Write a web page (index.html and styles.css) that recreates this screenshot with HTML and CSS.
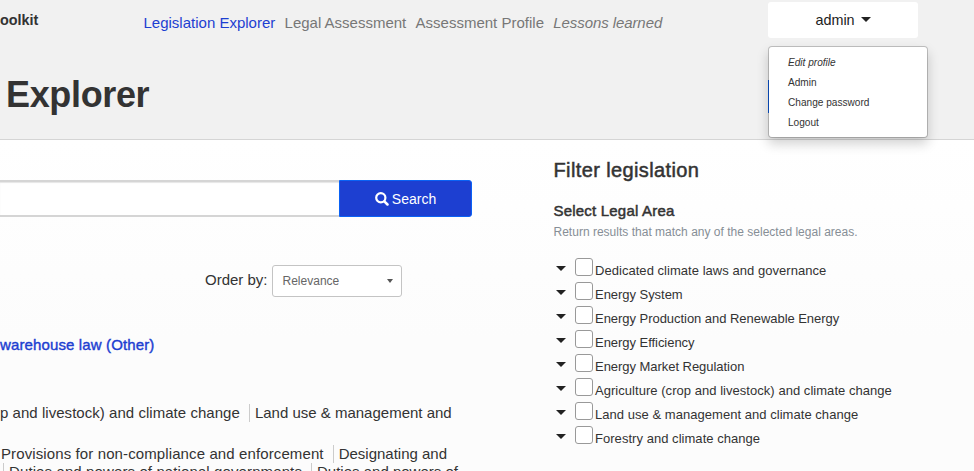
FILE: index.html
```html
<!DOCTYPE html>
<html lang="en">
<head>
<meta charset="utf-8">
<title>Legislation Explorer</title>
<link rel="stylesheet" href="styles.css">
</head>
<body>
<header class="header">
  <div class="topbar">
    <div class="brand">oolkit</div>
    <nav class="nav">
      <a class="active">Legislation Explorer</a>
      <a>Legal Assessment</a>
      <a>Assessment Profile</a>
      <a class="italic">Lessons learned</a>
    </nav>
    <div class="account">
      <button class="account-btn">admin<span class="caret"></span></button>
      <div class="menu">
        <a class="italic">Edit profile</a>
        <a>Admin</a>
        <a>Change password</a>
        <a>Logout</a>
      </div>
    </div>
  </div>
  <div class="titlebar">
    <h1>Explorer</h1>
    <span class="action"></span>
  </div>
</header>
<main class="main">
  <section class="results">
    <div class="search">
      <div class="search-input"></div>
      <button class="search-btn">
        <svg width="14" height="14" viewBox="0 0 14 14"><circle cx="5.8" cy="5.8" r="4.6" fill="none" stroke="#fff" stroke-width="2.2"/><path d="M9.3 9.3L12.5 12.5" stroke="#fff" stroke-width="2.5" stroke-linecap="round"/></svg>
        <span>Search</span>
      </button>
    </div>
    <div class="order">
      <span class="order-label">Order by:</span>
      <div class="select"><span>Relevance</span><i class="caret small"></i></div>
    </div>
    <h2 class="result-title">warehouse law (Other)</h2>
    <div class="tags first"><span class="t1">p and livestock) and climate change</span><span class="t2">Land use &amp; management and</span></div>
    <div class="tags second"><span class="t3">Provisions for non-compliance and enforcement</span><span class="t4">Designating and</span></div>
    <div class="tags third"><span class="t5">Duties and powers of national governments</span><span class="t6">Duties and powers of</span></div>
  </section>
  <aside class="filter">
    <h3>Filter legislation</h3>
    <h4>Select Legal Area</h4>
    <p>Return results that match any of the selected legal areas.</p>
    <ul>
      <li><i class="caret"></i><span class="box"></span><label>Dedicated climate laws and governance</label></li>
      <li><i class="caret"></i><span class="box"></span><label class="tight">Energy System</label></li>
      <li><i class="caret"></i><span class="box"></span><label class="tight">Energy Production and Renewable Energy</label></li>
      <li><i class="caret"></i><span class="box"></span><label class="tight">Energy Efficiency</label></li>
      <li><i class="caret"></i><span class="box"></span><label class="tight">Energy Market Regulation</label></li>
      <li><i class="caret"></i><span class="box"></span><label>Agriculture (crop and livestock) and climate change</label></li>
      <li><i class="caret"></i><span class="box"></span><label>Land use &amp; management and climate change</label></li>
      <li><i class="caret"></i><span class="box"></span><label>Forestry and climate change</label></li>
    </ul>
  </aside>
</main>
</body>
</html>
```
FILE: styles.css
```css
* { box-sizing: border-box; }
html, body { margin: 0; height: 471px; overflow: hidden; }
body {
  font-family: "Liberation Sans", Arial, sans-serif;
  font-size: 15px;
  color: #333;
  background: #fff;
}
h1, h2, h3, h4, p, ul { margin: 0; padding: 0; }
button { font-family: inherit; padding: 0; }
.italic { font-style: italic; }
.caret {
  display: inline-block;
  height: 0;
  border-left: 5px solid transparent;
  border-right: 5px solid transparent;
  border-top: 5px solid #222;
}
.caret.small { border-width: 4px 3.5px 0; border-top-color: #555; }

.header { height: 140px; background: #f1f1f1; border-bottom: 1px solid #d5d5d5; }
.topbar { display: flex; height: 46px; }
.brand { width: 143.5px; padding-top: 12px; font-size: 14.4px; line-height: 17px; font-weight: bold; }
.nav { display: flex; gap: 9.3px; width: 624.5px; padding-top: 14px; line-height: 18px; color: #777; white-space: nowrap; }
.nav .active { color: #1d3fd1; }
.nav .italic { letter-spacing: -.08px; }
.account { position: relative; padding-top: 2px; }
.account-btn {
  display: flex; align-items: center; justify-content: center; gap: 6px;
  width: 150px; height: 36px; border: 0; border-radius: 3px;
  background: #fff; color: #222; font-size: 14.4px;
}
.account-btn .caret { margin-bottom: 2px; }
.menu {
  position: absolute; left: 0; top: 46px; z-index: 2;
  display: flex; flex-direction: column;
  width: 160px; height: 92px; padding: 6px 19px;
  border: 1px solid rgba(0, 0, 0, .2); border-radius: 4px;
  background: #fff; background-clip: padding-box;
  box-shadow: 0 6px 12px rgba(0, 0, 0, .18);
  font-size: 10.1px; line-height: 20px;
}
.titlebar { display: flex; padding-left: 6px; }
h1 { width: 762px; padding-top: 28px; font-size: 36px; line-height: 42px; letter-spacing: -.35px; }
.action { width: 100px; height: 33px; margin-top: 34px; background: #0d62f0; }

.main { display: flex; height: 331px; background: linear-gradient(#fff, #fcfcfc 60%); }
.results { width: 553.5px; padding-top: 40px; }
.search { display: flex; width: 472px; height: 37px; }
.search-input { flex: 1; border: 2px solid #d5d5d5; border-width: 2px 0; background: #fff; box-shadow: inset 0 1px 1px rgba(0, 0, 0, .1); }
.search-btn {
  display: flex; align-items: center; justify-content: center; gap: 3px;
  width: 133px; border: 1px solid #0a62f5; border-radius: 0 3px 3px 0;
  background: #1d3fd1; color: #fff; font-size: 14px;
}
.order { display: flex; align-items: center; gap: 4px; height: 32px; margin: 48px 0 0 205px; }
.order-label { padding-bottom: 3px; }
.select {
  display: flex; align-items: center; justify-content: space-between;
  width: 130px; height: 32px; padding: 0 8px 0 10px;
  border: 1px solid #c4c4c4; border-radius: 3px; background: #fff;
  color: #666; font-size: 12px;
}
.result-title { margin-top: 39px; font-size: 15px; line-height: 18px; font-weight: normal; letter-spacing: .13px; color: #1d3fd1; -webkit-text-stroke: .4px #1d3fd1; }
.tags { display: flex; height: 18px; line-height: 18px; white-space: nowrap; }
.tags span + span { margin-left: 9px; padding-left: 5px; border-left: 1px solid #ccc; }
.t1 { letter-spacing: .04px; }
.t3, .t5 { letter-spacing: .11px; }
.first { margin-top: 50px; }
.second { margin-top: 23px; padding-left: 1px; }
.third { padding-left: 3px; }
.t5 { padding-left: 5px; border-left: 1px solid #ccc; }

.filter { padding-top: 17px; }
h3 { font-size: 20px; line-height: 26px; font-weight: normal; letter-spacing: .38px; -webkit-text-stroke: .5px #333; }
h4 { margin-top: 19px; font-size: 15px; line-height: 18px; font-weight: normal; letter-spacing: .2px; -webkit-text-stroke: .5px #333; }
p { margin-top: 4px; font-size: 12px; line-height: 16px; letter-spacing: .01px; color: #868e96; }
ul { margin-top: 18px; list-style: none; }
li { display: flex; height: 24px; padding-left: 2.5px; }
li .caret { margin-top: 8px; }
.box { width: 18px; height: 18px; margin-left: 9px; border: 1px solid #999; border-radius: 3px; background: #fff; }
li label { margin: 4px 0 0 2px; font-size: 13px; line-height: 18px; letter-spacing: .04px; }
li .tight { letter-spacing: -.04px; }
```
